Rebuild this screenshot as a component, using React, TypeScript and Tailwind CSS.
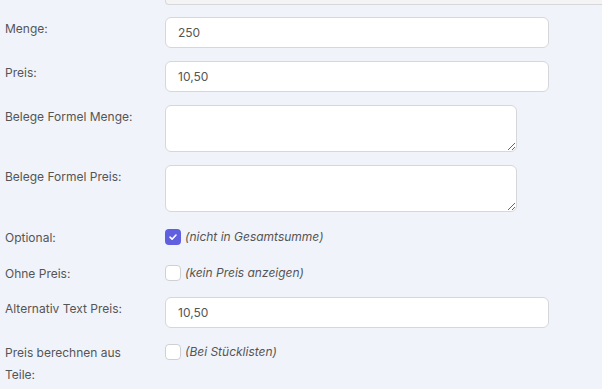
import React from 'react';

const font = { fontFamily: 'Inter, "Noto Sans", sans-serif' };

const Label: React.FC<{ text: string }> = ({ text }) => (
  <div className="w-[145px] shrink-0 pl-[5px] pr-[10px] pt-[1px] text-[12px] leading-[22px] text-[#555]">
    {text}
  </div>
);

const TextRow: React.FC<{ label: string; value: string }> = ({ label, value }) => (
  <div className="flex items-start">
    <Label text={label} />
    <input
      defaultValue={value}
      className="ml-[20px] h-[31px] w-[384px] rounded-[6px] border border-[#d6d7da] bg-white px-[12px] text-[12px] text-[#555] outline-none"
      style={font}
    />
  </div>
);

const AreaRow: React.FC<{ label: string }> = ({ label }) => (
  <div className="flex items-start">
    <Label text={label} />
    <textarea
      className="ml-[20px] block h-[47px] w-[352px] rounded-[6px] border border-[#d6d7da] bg-white px-[12px] py-[6px] text-[12px] text-[#555] outline-none"
      style={font}
    />
  </div>
);

const CheckRow: React.FC<{ label: string; hint: string; checked?: boolean }> = ({ label, hint, checked }) => (
  <div className="flex items-start">
    <Label text={label} />
    <div className="ml-[20px] flex items-center gap-[4px] leading-[22px]">
      {checked ? (
        <span className="flex h-[16px] w-[16px] items-center justify-center rounded-[4px] bg-[#5f5fe0]">
          <svg width="10" height="10" viewBox="0 0 10 10" fill="none">
            <path d="M2 5.2 L4.1 7.2 L8 3" stroke="white" strokeWidth="1.6" strokeLinecap="round" strokeLinejoin="round" />
          </svg>
        </span>
      ) : (
        <span className="h-[16px] w-[16px] rounded-[4px] border border-[#cfd0d4] bg-white" />
      )}
      <span className="text-[12px] italic text-[#555]">{hint}</span>
    </div>
  </div>
);

export default function App() {
  return (
    <div className="h-[389px] w-[602px] overflow-hidden bg-[#f0f3fa]" style={font}>
      <div className="flex">
        <div className="w-[165px] shrink-0" />
        <div className="h-[5px] w-[460px] shrink-0 rounded-bl-[4px] border-b border-l border-[#d6d7da] bg-[#f4f4f5]" />
      </div>
      <div className="flex flex-col gap-[13px] pt-[12px]">
        <TextRow label="Menge:" value="250" />
        <TextRow label="Preis:" value="10,50" />
        <AreaRow label="Belege Formel Menge:" />
        <AreaRow label="Belege Formel Preis:" />
        <div className="flex flex-col gap-[13px] pt-[1px]">
          <CheckRow label="Optional:" hint="(nicht in Gesamtsumme)" checked />
          <CheckRow label="Ohne Preis:" hint="(kein Preis anzeigen)" />
        </div>
        <div className="-mt-[1px]">
          <TextRow label="Alternativ Text Preis:" value="10,50" />
        </div>
        <CheckRow label="Preis berechnen aus Teile:" hint="(Bei Stücklisten)" />
      </div>
    </div>
  );
}
